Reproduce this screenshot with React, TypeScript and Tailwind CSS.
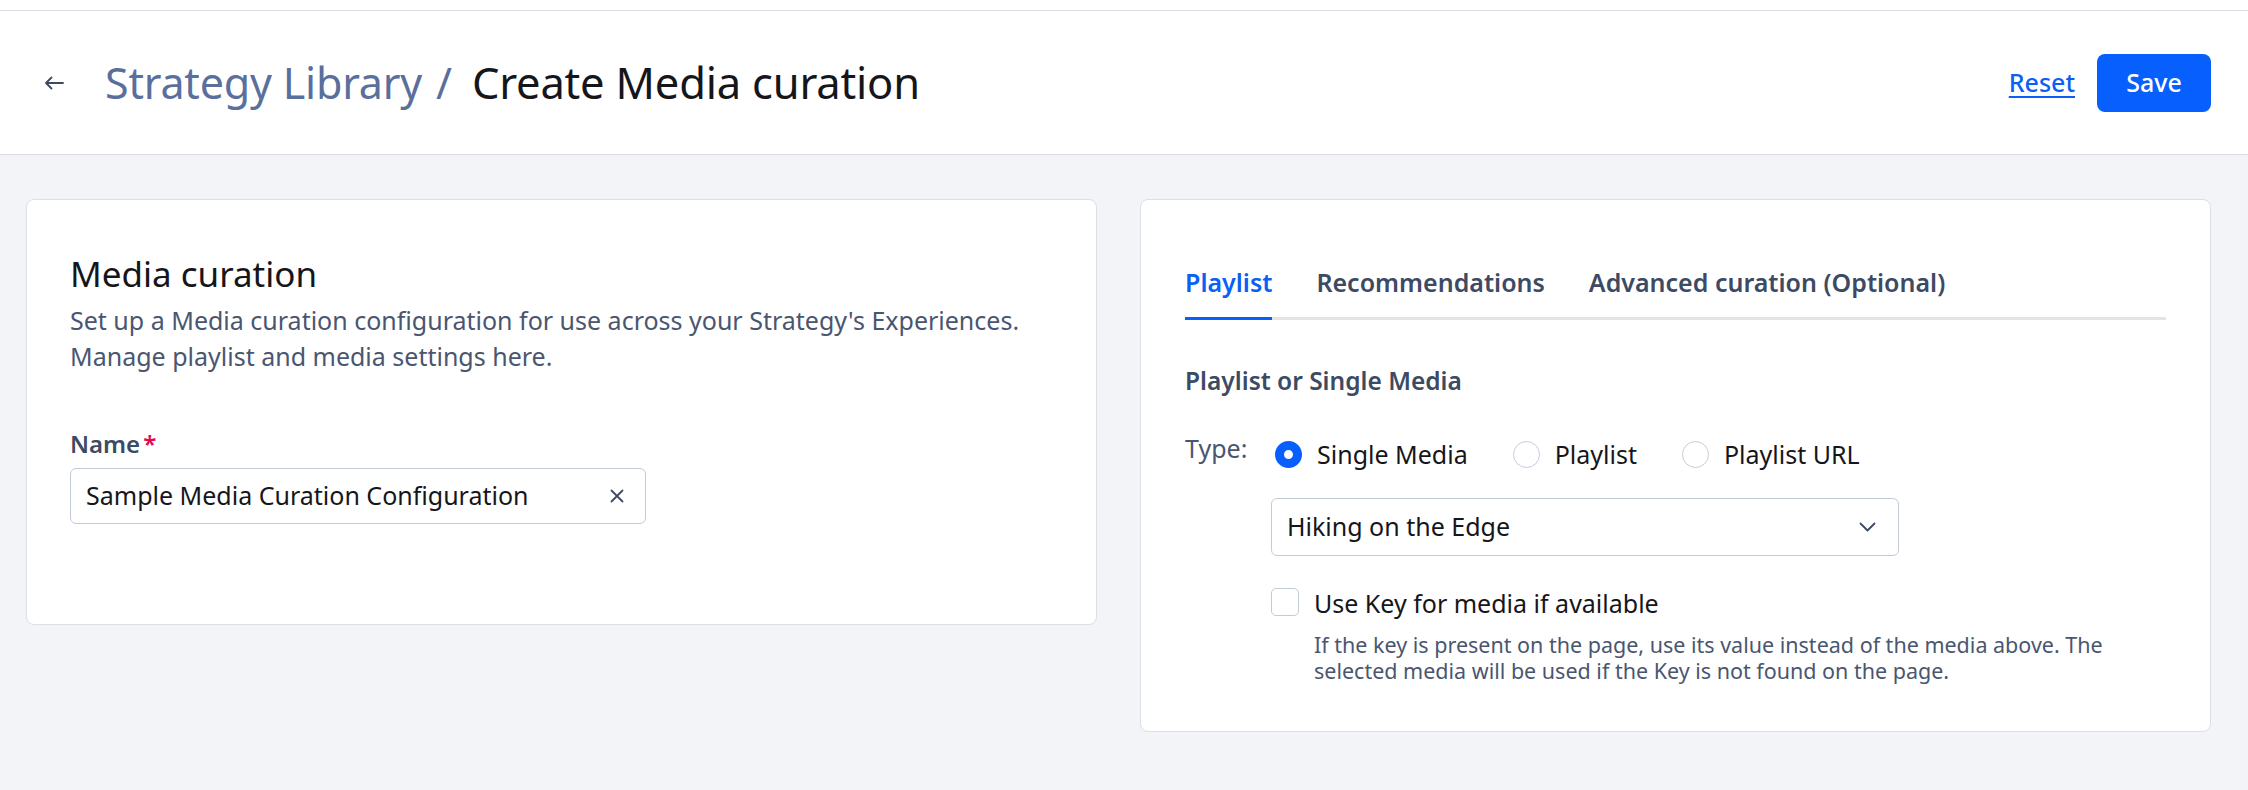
import { useState } from "react";

export default function App() {
  const [type, setType] = useState("single");
  const [tab, setTab] = useState("playlist");

  return (
    <div className="min-h-screen w-full bg-[#f3f4f8] font-['Noto_Sans',sans-serif]">
      {/* Header */}
      <div className="h-[10px] bg-white" />
      <header className="h-[145px] bg-white border-y border-[#dcdde6] flex items-center justify-between pl-[44px] pr-[37px]">
        <div className="flex items-center">
          <button className="w-5 h-5 flex items-center justify-center text-[#3d4a63]">
            <svg width="20" height="14" viewBox="0 0 20 14" fill="none" stroke="currentColor" strokeWidth="1.8" strokeLinecap="round" strokeLinejoin="round">
              <path d="M19 7H2M7.5 1.5L2 7l5.5 5.5" />
            </svg>
          </button>
          <h1 className="ml-[41px] text-[43px] leading-[56px] tracking-[-0.2px]">
            <span className="text-[#5a6f9c]">Strategy Library</span>
            <span className="text-[#5a6f9c] ml-[14px] mr-[20px]">/</span>
            <span className="text-[#16161a] text-[43.5px]">Create Media curation</span>
          </h1>
        </div>
        <div className="flex items-center gap-[22px]">
          <a href="#" className="text-[25px] font-medium text-[#0a5ff5] underline underline-offset-[4px] decoration-2">Reset</a>
          <button className="h-[58px] w-[114px] rounded-[8px] bg-[#0760fd] text-white text-[25px] font-medium">Save</button>
        </div>
      </header>

      {/* Body */}
      <main className="grid grid-cols-2 gap-[43px] pl-[26px] pr-[37px] pt-[44px] items-start">
        {/* Left card */}
        <section className="bg-white border border-[#dcdfe6] rounded-[8px] pl-[43px] pr-[40px] pt-[54px] pb-[100px]">
          <h2 className="text-[35px] leading-[40px] text-[#16161a]">Media curation</h2>
          <p className="mt-[8px] text-[25px] leading-[36px] text-[#4a5670]">
            Set up a Media curation configuration for use across your Strategy's Experiences. Manage playlist and media settings here.
          </p>
          <label className="mt-[54px] block text-[24px] leading-[32px] font-semibold text-[#3d4a63]">
            Name<span className="text-[#e8064f] ml-[3px]">*</span>
          </label>
          <div className="mt-[8px] w-[576px] h-[56px] border border-[#c4cbd8] rounded-[6px] flex items-center pl-[15px] pr-[21px]">
            <span className="flex-1 text-[25px] text-[#16161a]">Sample Media Curation Configuration</span>
            <svg width="14" height="14" viewBox="0 0 14 14" stroke="#3d4a63" strokeWidth="1.8" strokeLinecap="round">
              <path d="M1.5 1.5l11 11M12.5 1.5l-11 11" />
            </svg>
          </div>
        </section>

        {/* Right card */}
        <section className="bg-white border border-[#dcdfe6] rounded-[8px] px-[44px] pt-[66px] pb-[47px]">
          <nav className="flex gap-[44px] border-b-[3px] border-[#e2e4ea]">
            {[
              { id: "playlist", l: "Playlist" },
              { id: "recs", l: "Recommendations" },
              { id: "adv", l: "Advanced curation (Optional)" },
            ].map((t) => (
              <button
                key={t.id}
                onClick={() => setTab(t.id)}
                className={`-mb-[3px] pb-[19px] text-[25px] leading-[32px] font-semibold border-b-[3px] ${
                  tab === t.id ? "text-[#0a5ff5] border-[#0760fd]" : "text-[#3d4a63] border-transparent"
                }`}
              >
                {t.l}
              </button>
            ))}
          </nav>

          <h3 className="mt-[46px] text-[24.5px] leading-[30px] font-semibold text-[#3d4a63]">Playlist or Single Media</h3>

          <div className="mt-[42px] flex">
            <div className="w-[86px] text-[25px] leading-[32px] text-[#4a5670] -mt-[6px]">Type:</div>
            <div className="flex-1">
              <div className="flex items-center gap-[45px] h-[32px] pl-[4px]">
                {[
                  { id: "single", l: "Single Media" },
                  { id: "playlist", l: "Playlist" },
                  { id: "url", l: "Playlist URL" },
                ].map((r) => (
                  <label key={r.id} className="flex items-center gap-[15px] cursor-pointer" onClick={() => setType(r.id)}>
                    <span
                      className={`w-[27px] h-[27px] rounded-full ${
                        type === r.id ? "border-[9px] border-[#0760fd]" : "border border-[#c4cbd8]"
                      }`}
                    />
                    <span className="text-[25px] leading-[32px] text-[#16161a]">{r.l}</span>
                  </label>
                ))}
              </div>

              <div className="mt-[28px] w-[628px] h-[58px] border border-[#c4cbd8] rounded-[6px] flex items-center pl-[15px] pr-[22px]">
                <span className="flex-1 text-[25px] text-[#16161a]">Hiking on the Edge</span>
                <svg width="17" height="10" viewBox="0 0 17 10" fill="none" stroke="#3d4a63" strokeWidth="1.8" strokeLinecap="round" strokeLinejoin="round">
                  <path d="M1.5 1.5l7 7 7-7" />
                </svg>
              </div>

              <div className="mt-[31px] flex gap-[15px]">
                <span className="mt-[1px] w-[28px] h-[28px] shrink-0 rounded-[5px] border border-[#c4cbd8]" />
                <div>
                  <div className="text-[25px] leading-[32px] text-[#16161a]">Use Key for media if available</div>
                  <p className="mt-[13px] text-[21.5px] leading-[26px] text-[#4a5670]">
                    If the key is present on the page, use its value instead of the media above. The selected media will be used if the Key is not found on the page.
                  </p>
                </div>
              </div>
            </div>
          </div>
        </section>
      </main>
    </div>
  );
}
